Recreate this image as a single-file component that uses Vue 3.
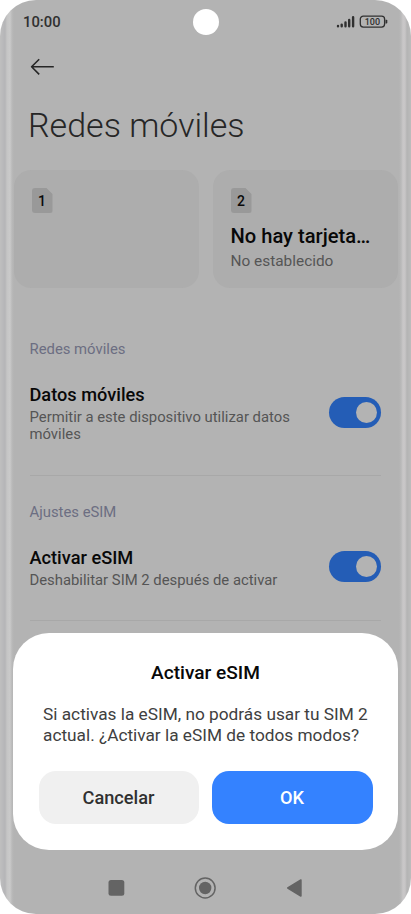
<template>
    <div class="phone">
        <header class="status-bar">
            <span class="clock">10:00</span>
            <span class="camera"></span>
            <svg class="status-icons" width="54" height="14" viewBox="0 0 54 14">
                <g stroke="#303030" stroke-width="2.4" stroke-linecap="round">
                    <path d="M3 11v.2M6.7 9.6v1.6M10.5 7.5v3.7M14.2 5v6.2M18.1 2.3v8.9" />
                </g>
                <rect x="25.3" y="1.1" width="24.3" height="11" rx="3" fill="none" stroke="#303030" stroke-width="1.3" />
                <path d="M50.5 4.7h1a.8.8 0 0 1 .8.8v2.2a.8.8 0 0 1-.8.8h-1z" fill="#303030" />
                <text x="37.4" y="10" text-anchor="middle" class="battery-text">100</text>
            </svg>
        </header>

        <button class="back" aria-label="Atrás">
            <svg width="24" height="18" viewBox="0 0 24 18">
                <path d="M23.8 8.8H1.6M9.2 1.2L1.6 8.8l7.6 7.6" fill="none" stroke="#262626" stroke-width="1.6" stroke-linejoin="round" />
            </svg>
        </button>

        <h1 class="page-title">Redes móviles</h1>

        <div class="sim-cards">
            <div v-for="sim in sims" :key="sim.slot" class="sim-card">
                <span class="sim-badge">{{ sim.slot }}</span>
                <div v-if="sim.name" class="sim-name">{{ sim.name }}</div>
                <div v-if="sim.status" class="sim-status">{{ sim.status }}</div>
            </div>
        </div>

        <section v-for="s in settings" :key="s.section" class="section">
            <h2 class="section-title">{{ s.section }}</h2>
            <div class="row" :class="s.size">
                <div class="row-text">
                    <div class="row-label">{{ s.label }}</div>
                    <div class="row-desc">{{ s.desc }}</div>
                </div>
                <button class="toggle" :class="{ on: s.enabled }" role="switch" :aria-checked="s.enabled" @click="s.enabled = !s.enabled">
                    <span class="knob"></span>
                </button>
            </div>
        </section>

        <nav class="nav-bar">
            <svg width="18" height="18" viewBox="0 0 18 18"><rect x="1.5" y="1" width="15.8" height="15.8" rx="2.5" fill="#646464" /></svg>
            <svg width="22" height="22" viewBox="0 0 22 22">
                <circle cx="11.2" cy="11" r="9.9" fill="none" stroke="#646464" stroke-width="1.5" />
                <circle cx="11.2" cy="11" r="6.2" fill="#646464" />
            </svg>
            <svg width="18" height="20" viewBox="0 0 18 20"><path d="M2.8 10L15.9 2v16z" fill="#646464" stroke="#646464" stroke-width="1.6" stroke-linejoin="round" /></svg>
        </nav>

        <div class="dialog" role="dialog">
            <h3 class="dialog-title">Activar eSIM</h3>
            <p class="dialog-text">Si activas la eSIM, no podrás usar tu SIM 2 actual. ¿Activar la eSIM de todos modos?</p>
            <div class="dialog-actions">
                <button class="btn">Cancelar</button>
                <button class="btn btn-primary">OK</button>
            </div>
        </div>
    </div>
</template>

<script setup>
import { ref } from 'vue';

const sims = [
    { slot: 1 },
    { slot: 2, name: 'No hay tarjeta…', status: 'No establecido' },
];

const settings = ref([
    {
        section: 'Redes móviles',
        label: 'Datos móviles',
        desc: 'Permitir a este dispositivo utilizar datos móviles',
        size: 'tall',
        enabled: true,
    },
    {
        section: 'Ajustes eSIM',
        label: 'Activar eSIM',
        desc: 'Deshabilitar SIM 2 después de activar',
        size: 'short',
        enabled: true,
    },
]);
</script>

<style>
body {
    background: #fff;
}
</style>

<style scoped>
.phone {
    position: relative;
    box-sizing: border-box;
    display: flex;
    flex-direction: column;
    width: 411px;
    height: 914px;
    padding: 0 13px;
    border-radius: 36px;
    overflow: hidden;
    font-family: Roboto, "Liberation Sans", sans-serif;
    background: linear-gradient(90deg,
        #bfbfbf 0, #b9b9bb 3px, #b5b5b7 5px, #c5c5c5 7px, #cacaca 10px, #b9b9b9 12px, #b3b3b3 14px,
        #b3b3b3 399px, #b9b9b9 401px, #c9c7c8 403px, #c7c5c6 405px, #b4b4b4 407px, #bcbcbc 411px);
}

button {
    padding: 0;
    border: 0;
    background: none;
    font-family: inherit;
    cursor: pointer;
}

h1, h2, h3, p { margin: 0; }

.status-bar {
    display: grid;
    grid-template-columns: 1fr 26px 1fr;
    align-items: center;
    height: 43px;
    padding: 0 9px 0 10px;
    flex: none;
}

.clock {
    font-size: 14.8px;
    font-weight: 500;
    color: #303030;
}

.camera {
    width: 26px;
    height: 26px;
    border-radius: 50%;
    background: #fff;
}

.status-icons { justify-self: end; }

.battery-text {
    font-size: 9px;
    font-weight: 500;
    fill: #303030;
}

.back {
    display: flex;
    align-self: flex-start;
    margin: 15px 0 0 17px;
}

.page-title {
    margin: 28px 0 0 15px;
    font-size: 34px;
    line-height: 42px;
    font-weight: 300;
    color: #262626;
    white-space: nowrap;
}

.sim-cards {
    display: grid;
    grid-template-columns: 1fr 1fr;
    gap: 14px;
    margin: 24px 0.5px 0;
}

.sim-card {
    box-sizing: border-box;
    height: 118px;
    padding: 18px 18px 0;
    border-radius: 17px;
    background: #adadad;
    overflow: hidden;
}

.sim-badge {
    display: flex;
    align-items: center;
    justify-content: center;
    width: 21px;
    height: 25px;
    border-radius: 3px;
    background: #999;
    clip-path: polygon(0 0, 15px 0, 100% 6px, 100% 100%, 0 100%);
    font-size: 14px;
    font-weight: 500;
    color: #0a0a0a;
}

.sim-name {
    margin-top: 11px;
    font-size: 20.15px;
    line-height: 24px;
    font-weight: 500;
    color: #080808;
    white-space: nowrap;
}

.sim-status {
    margin-top: 3px;
    font-size: 15.4px;
    line-height: 20px;
    color: #555;
}

.section { padding: 0 17px 0 16.5px; }

.section-title {
    margin-top: 51px;
    font-size: 14.85px;
    line-height: 20px;
    font-weight: 400;
    color: #6c6e82;
}

.section + .section .section-title { margin-top: 26px; }

.row {
    box-sizing: border-box;
    display: flex;
    justify-content: space-between;
    padding-top: 24px;
    border-bottom: 1px solid #a8a8a8;
}

.row.tall { height: 117px; }
.row.short { height: 99px; }

.row-text { width: 275px; }

.row-label {
    font-size: 18.2px;
    line-height: 24px;
    font-weight: 500;
    color: #080808;
}

.row-desc {
    margin-top: 1.5px;
    font-size: 14.85px;
    line-height: 17.5px;
    color: #555;
}

.toggle {
    display: flex;
    align-items: center;
    flex: none;
    width: 52.5px;
    height: 31px;
    padding: 0 4.5px;
    border-radius: 16px;
    background: #999;
}

.tall .toggle { margin-top: 14px; }
.short .toggle { margin-top: 5px; }

.toggle.on {
    justify-content: flex-end;
    background: #245db6;
}

.knob {
    width: 21px;
    height: 21px;
    border-radius: 50%;
    background: #b3b3b3;
}

.nav-bar {
    display: flex;
    align-items: center;
    justify-content: space-between;
    height: 52px;
    margin-top: auto;
    padding: 0 95px 0 94px;
}

.dialog {
    position: absolute;
    left: 13px;
    top: 632.5px;
    box-sizing: border-box;
    width: 385px;
    height: 217px;
    padding: 28.5px 25.5px 0;
    border-radius: 36px;
    background: #fff;
}

.dialog-title {
    font-size: 19.1px;
    line-height: 24px;
    font-weight: 500;
    text-align: center;
    color: #080808;
}

.dialog-text {
    margin: 19px 0 0 4.5px;
    font-size: 17.25px;
    line-height: 21px;
    color: #404040;
}

.dialog-actions {
    display: grid;
    grid-template-columns: 160px 161px;
    gap: 13px;
    margin-top: 25px;
}

.btn {
    height: 53px;
    border-radius: 17px;
    background: #f0f0f0;
    font-size: 18.2px;
    font-weight: 500;
    color: #303030;
}

.btn-primary {
    background: #3482ff;
    color: #fff;
}
</style>
